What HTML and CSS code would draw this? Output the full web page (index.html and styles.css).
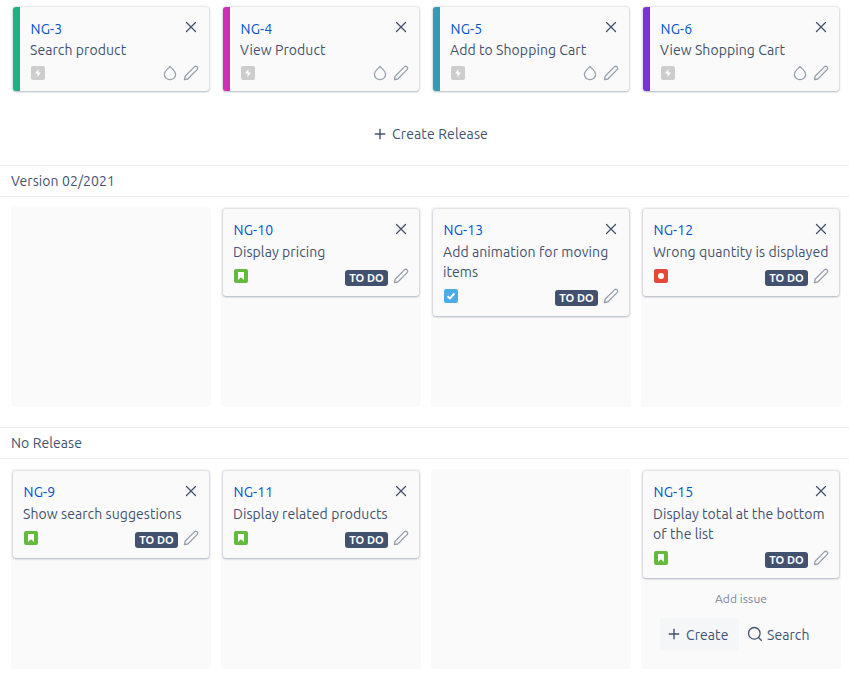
FILE: index.html
```html
<!DOCTYPE html>
<html lang="en">
<head>
<meta charset="utf-8">
<title>Story map</title>
<link rel="stylesheet" href="styles.css">
</head>
<body>
<svg class="defs" aria-hidden="true">
  <symbol id="close" viewBox="0 0 12 12"><path d="M1.500 1.500l9 9M10.500 1.500l-9 9" fill="none" stroke="currentColor" stroke-width="1.300" stroke-linecap="round"/></symbol>
  <symbol id="pencil" viewBox="0 0 16 16"><path d="M1.500 14.600l.6-3.300 9.300-9.400a1.900 1.900 0 0 1 2.700 2.700L4.800 14z" fill="none" stroke="currentColor" stroke-width="1.300" stroke-linejoin="round"/></symbol>
  <symbol id="drop" viewBox="0 0 14 16"><path d="M7 1.300C5.500 3.600 1.400 6 1.400 9.300a5.600 5.400 0 0 0 11.200 0C12.600 6 8.500 3.600 7 1.300z" fill="none" stroke="currentColor" stroke-width="1.250" stroke-linejoin="round"/></symbol>
  <symbol id="plus" viewBox="0 0 12 12"><path d="M6 .8v10.400M.8 6h10.400" fill="none" stroke="currentColor" stroke-width="1.400"/></symbol>
  <symbol id="search" viewBox="0 0 16 16"><circle cx="7.300" cy="7.300" r="5.800" fill="none" stroke="currentColor" stroke-width="1.300"/><path d="M11.500 11.500l3.200 3.200" stroke="currentColor" stroke-width="1.300"/></symbol>
  <symbol id="epic" viewBox="0 0 14 14"><rect width="14" height="14" rx="2" fill="#cdcdcd"/><path d="M7.400 3L4 7.600h2.500V11L10 6.400H7.400z" fill="#fff"/></symbol>
  <symbol id="story" viewBox="0 0 14 14"><rect width="14" height="14" rx="2" fill="#63ba3c"/><path d="M4 3h6v8L7 8.200 4 11z" fill="#fff"/></symbol>
  <symbol id="task" viewBox="0 0 14 14"><rect width="14" height="14" rx="2" fill="#4bade8"/><path d="M3.600 7.300l2.300 2.200 4.500-5" fill="none" stroke="#fff" stroke-width="1.900"/></symbol>
  <symbol id="bug" viewBox="0 0 14 14"><rect width="14" height="14" rx="2" fill="#e5493a"/><circle cx="7" cy="7" r="3" fill="#fff"/></symbol>
</svg>

<main>
  <section class="epics">
    <article class="card epic green"><div class="head"><a class="key">NG-3</a><svg class="close"><use href="#close"/></svg></div><p class="title">Search product</p><div class="foot"><svg class="type"><use href="#epic"/></svg><svg class="drop"><use href="#drop"/></svg><svg class="pencil"><use href="#pencil"/></svg></div></article>
    <article class="card epic pink"><div class="head"><a class="key">NG-4</a><svg class="close"><use href="#close"/></svg></div><p class="title">View Product</p><div class="foot"><svg class="type"><use href="#epic"/></svg><svg class="drop"><use href="#drop"/></svg><svg class="pencil"><use href="#pencil"/></svg></div></article>
    <article class="card epic teal"><div class="head"><a class="key">NG-5</a><svg class="close"><use href="#close"/></svg></div><p class="title">Add to Shopping Cart</p><div class="foot"><svg class="type"><use href="#epic"/></svg><svg class="drop"><use href="#drop"/></svg><svg class="pencil"><use href="#pencil"/></svg></div></article>
    <article class="card epic purple"><div class="head"><a class="key">NG-6</a><svg class="close"><use href="#close"/></svg></div><p class="title">View Shopping Cart</p><div class="foot"><svg class="type"><use href="#epic"/></svg><svg class="drop"><use href="#drop"/></svg><svg class="pencil"><use href="#pencil"/></svg></div></article>
  </section>

  <div class="new-release"><svg class="plus"><use href="#plus"/></svg><span>Create Release</span></div>

  <section class="release">
    <h2>Version 02/2021</h2>
    <div class="columns">
      <div class="column"></div>
      <div class="column">
        <article class="card"><div class="head"><a class="key">NG-10</a><svg class="close"><use href="#close"/></svg></div><p class="title">Display pricing</p><div class="foot"><svg class="type"><use href="#story"/></svg><span class="status">TO DO</span><svg class="pencil"><use href="#pencil"/></svg></div></article>
      </div>
      <div class="column">
        <article class="card"><div class="head"><a class="key">NG-13</a><svg class="close"><use href="#close"/></svg></div><p class="title">Add animation for moving<br>items</p><div class="foot"><svg class="type"><use href="#task"/></svg><span class="status">TO DO</span><svg class="pencil"><use href="#pencil"/></svg></div></article>
      </div>
      <div class="column">
        <article class="card"><div class="head"><a class="key">NG-12</a><svg class="close"><use href="#close"/></svg></div><p class="title">Wrong quantity is displayed</p><div class="foot"><svg class="type"><use href="#bug"/></svg><span class="status">TO DO</span><svg class="pencil"><use href="#pencil"/></svg></div></article>
      </div>
    </div>
  </section>

  <section class="release">
    <h2>No Release</h2>
    <div class="columns">
      <div class="column">
        <article class="card"><div class="head"><a class="key">NG-9</a><svg class="close"><use href="#close"/></svg></div><p class="title">Show search suggestions</p><div class="foot"><svg class="type"><use href="#story"/></svg><span class="status">TO DO</span><svg class="pencil"><use href="#pencil"/></svg></div></article>
      </div>
      <div class="column">
        <article class="card"><div class="head"><a class="key">NG-11</a><svg class="close"><use href="#close"/></svg></div><p class="title">Display related products</p><div class="foot"><svg class="type"><use href="#story"/></svg><span class="status">TO DO</span><svg class="pencil"><use href="#pencil"/></svg></div></article>
      </div>
      <div class="column"></div>
      <div class="column">
        <article class="card"><div class="head"><a class="key">NG-15</a><svg class="close"><use href="#close"/></svg></div><p class="title">Display total at the bottom<br>of the list</p><div class="foot"><svg class="type"><use href="#story"/></svg><span class="status">TO DO</span><svg class="pencil"><use href="#pencil"/></svg></div></article>
        <p class="hint">Add issue</p>
        <div class="actions">
          <span class="action create"><svg class="plus"><use href="#plus"/></svg><span>Create</span></span>
          <span class="action find"><svg class="search"><use href="#search"/></svg><span>Search</span></span>
        </div>
      </div>
    </div>
  </section>
</main>
</body>
</html>
```
FILE: styles.css
```css
* { box-sizing: border-box; }
body {
  margin: 0;
  width: 849px;
  height: 682px;
  overflow: hidden;
  background: #fff;
  color: #42526e;
  font: 14px/20px Ubuntu, "Noto Sans", sans-serif;
  letter-spacing: 0.08px;
}
p, h2 { margin: 0; font: inherit; white-space: nowrap; }
svg { display: block; flex: none; }
.defs { display: none; }

.epics, .columns { display: grid; grid-template-columns: repeat(4, 200px); gap: 10px; padding: 0 0 0 11px; }
.epics { padding-top: 7px; }
.columns { padding-top: 10px; padding-bottom: 20px; }
.column { height: 200px; padding: 2px; border-radius: 3px; background: #fafafa; }

.card {
  width: 196px;
  padding: 11px 10px 10px;
  border-radius: 3px;
  background: #fafafa;
  box-shadow: 0 1px 2px rgba(9, 30, 66, .22), 0 0 2px 1px rgba(9, 30, 66, .11);
}
.epic { margin-left: 2px; padding: 12px 10px 8px; border-left: 7px solid; }
.column .card { margin-left: 0; }
.green { border-left-color: #1db283; }
.pink { border-left-color: #cf2eb8; }
.teal { border-left-color: #3799b4; }
.purple { border-left-color: #7a33d8; }

.head { display: flex; justify-content: space-between; height: 20px; }
.key { padding-left: 0.6px; color: #0052cc; }
.close { width: 12px; height: 12px; margin: 3px 2px 0 0; color: #42526e; }
.epic .close { margin-top: 2px; }
.title { margin-top: 2px; }
.epic .title { margin-top: 1px; }
.foot { display: flex; align-items: center; height: 20px; margin-top: 4px; color: #97a0af; }
.epic .foot { margin-top: 3px; }
.type { width: 14px; height: 14px; margin: 0 auto 0 1px; }
.drop { width: 14px; height: 16px; margin-right: 6px; }
.pencil { width: 16px; height: 16px; }
.status {
  width: 43px;
  height: 16px;
  margin: 4px 5px 0 0;
  border-radius: 3px;
  background: #42526e;
  color: #fff;
  font-size: 11px;
  font-weight: 700;
  line-height: 16px;
  text-align: center;
}

.new-release { display: flex; align-items: center; height: 20px; margin: 33px 0 21px 374px; gap: 6px; }
.new-release span { letter-spacing: 0.14px; }
.plus { width: 12px; height: 12px; }

.release h2 { height: 32px; padding: 5px 11px 0; border: solid #ebecf0; border-width: 1px 0; }

.hint { margin-top: 11px; color: #7a869a; font-size: 12px; text-align: center; }
.actions { display: flex; margin: 9px 0 0 17px; }
.action { display: flex; align-items: center; height: 32px; gap: 6px; }
.action > span { padding-top: 2px; }
.create { width: 79px; padding-left: 8px; border-radius: 3px; background: #f4f6f8; }
.find { margin-left: 8px; gap: 4px; }
.search { width: 16px; height: 16px; }
```
